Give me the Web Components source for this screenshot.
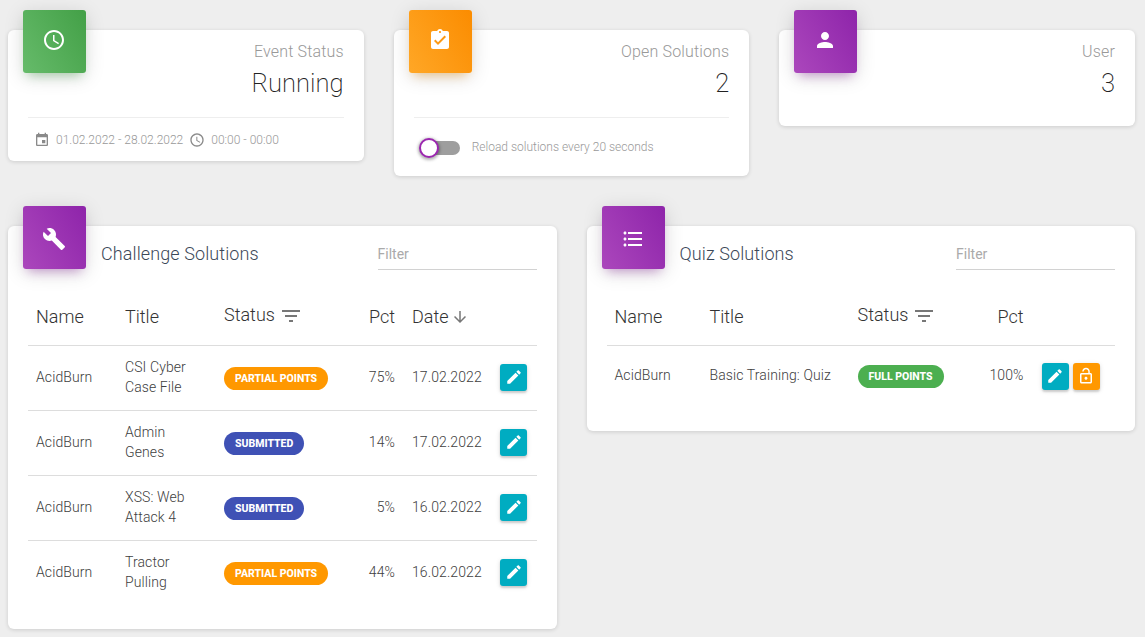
<!DOCTYPE html>
<html lang="en">
<head>
<meta charset="utf-8">
<title>Solutions</title>
<style>
  html, body { margin: 0; background: #eeeeee; }
  body { font-family: Roboto, "Liberation Sans", sans-serif; font-weight: 300; color: #333; }
</style>
</head>
<body>
<dash-page>
  <stat-card slot="stats" color="green" icon="schedule" label="Event Status" value="Running">
    <event-dates from="01.02.2022 - 28.02.2022" time="00:00 - 00:00"></event-dates>
  </stat-card>
  <stat-card slot="stats" color="orange" icon="clipboard" label="Open Solutions" value="2">
    <reload-toggle>Reload solutions every 20 seconds</reload-toggle>
  </stat-card>
  <stat-card slot="stats" color="purple" icon="person" label="User" value="3" bare></stat-card>

  <panel-card slot="panels" icon="build" heading="Challenge Solutions" style="--cols: 89px 99px 120px 51px 105px 1fr; --row-h: 65px; --pad-bottom: 23px">
    <sol-row head>
      <span>Name</span><span>Title</span>
      <span class="status">Status <md-icon name="filter" size="24" color="#777" style="margin-top:1px"></md-icon></span>
      <span class="num">Pct</span>
      <span class="date">Date <md-icon name="down" size="18" color="#777"></md-icon></span>
      <span></span>
    </sol-row>
    <sol-row>
      <span>AcidBurn</span><span>CSI Cyber<br>Case File</span>
      <span><status-badge color="#ff9800">Partial Points</status-badge></span>
      <span class="num">75%</span><span class="date">17.02.2022</span>
      <span><icon-button name="edit" color="#00acc1"></icon-button></span>
    </sol-row>
    <sol-row>
      <span>AcidBurn</span><span>Admin<br>Genes</span>
      <span><status-badge color="#3f51b5">Submitted</status-badge></span>
      <span class="num">14%</span><span class="date">17.02.2022</span>
      <span><icon-button name="edit" color="#00acc1"></icon-button></span>
    </sol-row>
    <sol-row>
      <span>AcidBurn</span><span>XSS: Web<br>Attack 4</span>
      <span><status-badge color="#3f51b5">Submitted</status-badge></span>
      <span class="num">5%</span><span class="date">16.02.2022</span>
      <span><icon-button name="edit" color="#00acc1"></icon-button></span>
    </sol-row>
    <sol-row>
      <span>AcidBurn</span><span>Tractor<br>Pulling</span>
      <span><status-badge color="#ff9800">Partial Points</status-badge></span>
      <span class="num">44%</span><span class="date">16.02.2022</span>
      <span><icon-button name="edit" color="#00acc1"></icon-button></span>
    </sol-row>
  </panel-card>

  <panel-card slot="panels" icon="list" heading="Quiz Solutions" style="--cols: 95px 148px 100px 66px 1fr; --row-h: 61px; --pad-bottom: 24px">
    <sol-row head>
      <span>Name</span><span>Title</span>
      <span class="status">Status <md-icon name="filter" size="24" color="#777" style="margin-top:1px"></md-icon></span>
      <span class="num">Pct</span>
      <span></span>
    </sol-row>
    <sol-row>
      <span>AcidBurn</span><span>Basic Training: Quiz</span>
      <span><status-badge color="#4caf50">Full Points</status-badge></span>
      <span class="num">100%</span>
      <span class="actions"><icon-button name="edit" color="#00acc1"></icon-button><icon-button name="lock" color="#ff9800"></icon-button></span>
    </sol-row>
  </panel-card>
</dash-page>

<script>
const ICONS = {
  schedule: "M11.99 2C6.47 2 2 6.48 2 12s4.47 10 9.99 10C17.52 22 22 17.52 22 12S17.52 2 11.99 2zM12 20c-4.42 0-8-3.58-8-8s3.58-8 8-8 8 3.58 8 8-3.58 8-8 8zm.5-13H11v6l5.25 3.15.75-1.23-4.5-2.67z",
  clipboard: "M19 3h-4.18C14.4 1.84 13.3 1 12 1c-1.3 0-2.4.84-2.82 2H5c-1.1 0-2 .9-2 2v14c0 1.1.9 2 2 2h14c1.1 0 2-.9 2-2V5c0-1.1-.9-2-2-2zm-7 0c.55 0 1 .45 1 1s-.45 1-1 1-1-.45-1-1 .45-1 1-1zm-2 14l-4-4 1.41-1.41L10 14.17l6.59-6.59L18 9l-8 8z",
  person: "M12 12c2.21 0 4-1.79 4-4s-1.79-4-4-4-4 1.79-4 4 1.79 4 4 4zm0 2c-2.67 0-8 1.34-8 4v2h16v-2c0-2.66-5.33-4-8-4z",
  build: "M22.7 19l-9.1-9.1c.9-2.3.4-5-1.5-6.9-2-2-5-2.4-7.4-1.3L9 6 6 9 1.6 4.7C.4 7.1.9 10.1 2.9 12.1c1.9 1.9 4.6 2.4 6.9 1.5l9.1 9.1c.4.4 1 .4 1.4 0l2.3-2.3c.5-.4.5-1.1.1-1.4z",
  list: "M4 10.5c-.83 0-1.5.67-1.5 1.5s.67 1.5 1.5 1.5 1.5-.67 1.5-1.5-.67-1.5-1.5-1.5zm0-6c-.83 0-1.5.67-1.5 1.5S3.17 7.5 4 7.5 5.5 6.83 5.5 6 4.83 4.5 4 4.5zm0 12c-.83 0-1.5.68-1.5 1.5s.68 1.5 1.5 1.5 1.5-.68 1.5-1.5-.67-1.5-1.5-1.5zM7 19h14v-2H7v2zm0-6h14v-2H7v2zm0-8v2h14V5H7z",
  edit: "M3 17.25V21h3.75L17.81 9.94l-3.75-3.75L3 17.25zM20.71 7.04c.39-.39.39-1.02 0-1.41l-2.34-2.34c-.39-.39-1.02-.39-1.41 0l-1.83 1.83 3.75 3.75 1.83-1.83z",
  lock: "M12 17c1.1 0 2-.9 2-2s-.9-2-2-2-2 .9-2 2 .9 2 2 2zm6-9h-1V6c0-2.76-2.24-5-5-5S7 3.24 7 6h1.9c0-1.71 1.39-3.1 3.1-3.1 1.71 0 3.1 1.39 3.1 3.1v2H6c-1.1 0-2 .9-2 2v10c0 1.1.9 2 2 2h12c1.1 0 2-.9 2-2V10c0-1.1-.9-2-2-2zm0 12H6V10h12v10z",
  event: "M17 12h-5v5h5v-5zM16 1v2H8V1H6v2H5c-1.11 0-1.99.9-1.99 2L3 19c0 1.1.89 2 2 2h14c1.1 0 2-.9 2-2V5c0-1.1-.9-2-2-2h-1V1h-2zm3 18H5V8h14v11z",
  filter: "M10 18h4v-2h-4v2zM3 6v2h18V6H3zm3 7h12v-2H6v2z",
  down: "M20 12l-1.41-1.41L13 16.17V4h-2v12.17l-5.58-5.59L4 12l8 8 8-8z",
};

const TILES = {
  green: ["#66bb6a", "#43a047", "76,175,80"],
  orange: ["#ffa726", "#fb8c00", "255,152,0"],
  purple: ["#ab47bc", "#8e24aa", "156,39,176"],
};

class MdIcon extends HTMLElement {
  connectedCallback() {
    if (this.shadowRoot) return;
    const size = this.getAttribute("size") || 24;
    const color = this.getAttribute("color") || "currentColor";
    this.attachShadow({ mode: "open" });
    this.shadowRoot.innerHTML = `
    <style>
    :host { display: inline-flex; flex: none; width: ${size}px; height: ${size}px; }
    svg { display: block; width: 100%; height: 100%; fill: ${color}; }
    </style>
    <svg viewBox="0 0 24 24"><path d="${ICONS[this.getAttribute("name")]}"></path></svg>
    `;
  }
}
customElements.define("md-icon", MdIcon);

class IconTile extends HTMLElement {
  connectedCallback() {
    if (this.shadowRoot) return;
    const [from, to, rgb] = TILES[this.getAttribute("color")];
    const top = this.getAttribute("icon-top") || 18;
    this.attachShadow({ mode: "open" });
    this.shadowRoot.innerHTML = `
    <style>
    :host {
      display: flex;
      justify-content: center;
      align-items: flex-start;
      box-sizing: border-box;
      width: 63px;
      height: 63px;
      padding: ${top}px 1px 0 0;
      border-radius: 3px;
      background: linear-gradient(60deg, ${from}, ${to});
      box-shadow: 0 4px 20px 0 rgba(0,0,0,.14), 0 7px 10px -5px rgba(${rgb},.4);
    }
    </style>
    <md-icon name="${this.getAttribute("icon")}" color="#fff"></md-icon>
    `;
  }
}
customElements.define("icon-tile", IconTile);

class StatCard extends HTMLElement {
  connectedCallback() {
    if (this.shadowRoot) return;
    this.attachShadow({ mode: "open" });
    this.shadowRoot.innerHTML = `
    <style>
    :host {
      display: block;
      padding: 0 20px;
      background: #fff;
      border-radius: 6px;
      box-shadow: 0 1px 4px 0 rgba(0,0,0,.14);
    }
    .top { display: flex; height: 87px; }
    icon-tile { margin: -20px 0 0 -5px; }
    .text { flex: 1; text-align: right; padding-top: 12px; }
    .label { font-size: 16px; line-height: 19px; color: #999; letter-spacing: .15px; }
    .value { font-size: 25.55px; font-weight: 200; line-height: 34px; margin-top: 5px; color: #222; }
    .foot { border-top: 1px solid #eee; padding: 11px 0 10px; }
    :host([bare]) .foot { border-top: 0; padding: 0 0 9px; }
    </style>
    <div class="top">
      <icon-tile color="${this.getAttribute("color")}" icon="${this.getAttribute("icon")}"></icon-tile>
      <div class="text">
        <div class="label">${this.getAttribute("label")}</div>
        <div class="value">${this.getAttribute("value")}</div>
      </div>
    </div>
    <div class="foot"><slot></slot></div>
    `;
  }
}
customElements.define("stat-card", StatCard);

class EventDates extends HTMLElement {
  connectedCallback() {
    if (this.shadowRoot) return;
    this.attachShadow({ mode: "open" });
    this.shadowRoot.innerHTML = `
    <style>
    :host { display: flex; align-items: center; height: 22px; padding-left: 6px; font-size: 12px; color: #999; }
    md-icon { margin-right: 6px; }
    span { margin-right: 6px; }
    </style>
    <md-icon name="event" size="16" color="#8a8a8a"></md-icon><span>${this.getAttribute("from")}</span>
    <md-icon name="schedule" size="16" color="#8a8a8a"></md-icon><span>${this.getAttribute("time")}</span>
    `;
  }
}
customElements.define("event-dates", EventDates);

class ReloadToggle extends HTMLElement {
  connectedCallback() {
    if (this.shadowRoot) return;
    this.attachShadow({ mode: "open" });
    this.shadowRoot.innerHTML = `
    <style>
    :host { display: flex; align-items: center; height: 37px; padding-left: 6px; font-size: 12px; color: #999; }
    .track { display: flex; align-items: center; width: 40px; height: 14px; margin-right: 12px; border-radius: 7px; background: #9e9e9e; }
    .thumb {
      box-sizing: border-box;
      width: 20px;
      height: 20px;
      margin-left: -1px;
      border: 2px solid #9c27b0;
      border-radius: 50%;
      background: #fff;
      box-shadow: 0 1px 3px 1px rgba(0,0,0,.3);
    }
    .label { margin-bottom: 2px; }
    </style>
    <div class="track"><div class="thumb"></div></div>
    <div class="label"><slot></slot></div>
    `;
  }
}
customElements.define("reload-toggle", ReloadToggle);

class FilterInput extends HTMLElement {
  constructor() {
    super();
    this.attachShadow({ mode: "open" });
    this.shadowRoot.innerHTML = `
    <style>
    :host { display: block; box-sizing: border-box; width: 159px; height: 36px; padding-top: 12px; border-bottom: 1px solid #d2d2d2; font-size: 14px; font-weight: 400; line-height: 16px; color: #aaa; }
    </style>
    Filter
    `;
  }
}
customElements.define("filter-input", FilterInput);

class PanelCard extends HTMLElement {
  connectedCallback() {
    if (this.shadowRoot) return;
    this.attachShadow({ mode: "open" });
    this.shadowRoot.innerHTML = `
    <style>
    :host {
      display: block;
      padding: 0 20px var(--pad-bottom);
      background: #fff;
      border-radius: 6px;
      box-shadow: 0 1px 4px 0 rgba(0,0,0,.14);
    }
    .top { display: flex; height: 64px; }
    icon-tile { margin: -20px 15px 0 -5px; }
    h4 { flex: 1; margin: 16px 0 0; font-size: 18px; font-weight: 300; line-height: 24px; letter-spacing: .1px; color: #3c4858; }
    filter-input { margin-top: 8px; }
    </style>
    <div class="top">
      <icon-tile color="purple" icon="${this.getAttribute("icon")}" icon-top="21"></icon-tile>
      <h4>${this.getAttribute("heading")}</h4>
      <filter-input></filter-input>
    </div>
    <slot></slot>
    `;
  }
}
customElements.define("panel-card", PanelCard);

class SolRow extends HTMLElement {
  constructor() {
    super();
    this.attachShadow({ mode: "open" });
    this.shadowRoot.innerHTML = `
    <style>
    :host {
      display: grid;
      grid-template-columns: var(--cols);
      align-items: center;
      box-sizing: border-box;
      min-height: var(--row-h);
      padding: 0 0 2px 8px;
      border-bottom: 1px solid #ddd;
      font-size: 14px;
      line-height: 20px;
      letter-spacing: .1px;
      color: #404040;
    }
    :host(:last-child) { border-bottom-color: transparent; }
    :host([head]) { min-height: 56px; font-size: 18px; line-height: 24px; letter-spacing: 0; color: #333; }
    ::slotted(.num) { text-align: right; }
    ::slotted(.date) { display: flex; align-items: center; gap: 2px; padding-left: 17px; }
    ::slotted(.status) { display: flex; align-items: flex-start; gap: 4px; margin-bottom: 2px; }
    ::slotted(.actions) { display: flex; gap: 4px; padding: 2px 0 0 18px; }
    </style>
    <slot></slot>
    `;
  }
}
customElements.define("sol-row", SolRow);

class StatusBadge extends HTMLElement {
  connectedCallback() {
    if (this.shadowRoot) return;
    this.attachShadow({ mode: "open" });
    this.shadowRoot.innerHTML = `
    <style>
    :host {
      display: inline-block;
      vertical-align: middle;
      margin-top: 2px;
      padding: 0 11px;
      border-radius: 12px;
      background: ${this.getAttribute("color")};
      color: #fff;
      font-size: 10.5px;
      font-weight: 800;
      line-height: 23px;
      letter-spacing: 0;
      text-transform: uppercase;
    }
    </style>
    <slot></slot>
    `;
  }
}
customElements.define("status-badge", StatusBadge);

class IconButton extends HTMLElement {
  connectedCallback() {
    if (this.shadowRoot) return;
    this.attachShadow({ mode: "open" });
    this.shadowRoot.innerHTML = `
    <style>
    :host {
      display: inline-flex;
      vertical-align: middle;
      justify-content: center;
      align-items: center;
      width: 27px;
      height: 27px;
      border-radius: 3px;
      background: ${this.getAttribute("color")};
      box-shadow: 0 2px 2px 0 rgba(0,0,0,.14), 0 1px 5px 0 rgba(0,0,0,.12);
    }
    </style>
    <md-icon name="${this.getAttribute("name")}" size="18" color="#fff"></md-icon>
    `;
  }
}
customElements.define("icon-button", IconButton);

class DashPage extends HTMLElement {
  constructor() {
    super();
    this.attachShadow({ mode: "open" });
    this.shadowRoot.innerHTML = `
    <style>
    :host { display: block; padding: 30px 10px 8px 8px; }
    .stats, .panels { display: grid; gap: 30px; align-items: start; }
    .stats { grid-template-columns: repeat(3, 1fr); margin-bottom: 50px; }
    .panels { grid-template-columns: repeat(2, 1fr); }
    </style>
    <div class="stats"><slot name="stats"></slot></div>
    <div class="panels"><slot name="panels"></slot></div>
    `;
  }
}
customElements.define("dash-page", DashPage);
</script>
</body>
</html>
